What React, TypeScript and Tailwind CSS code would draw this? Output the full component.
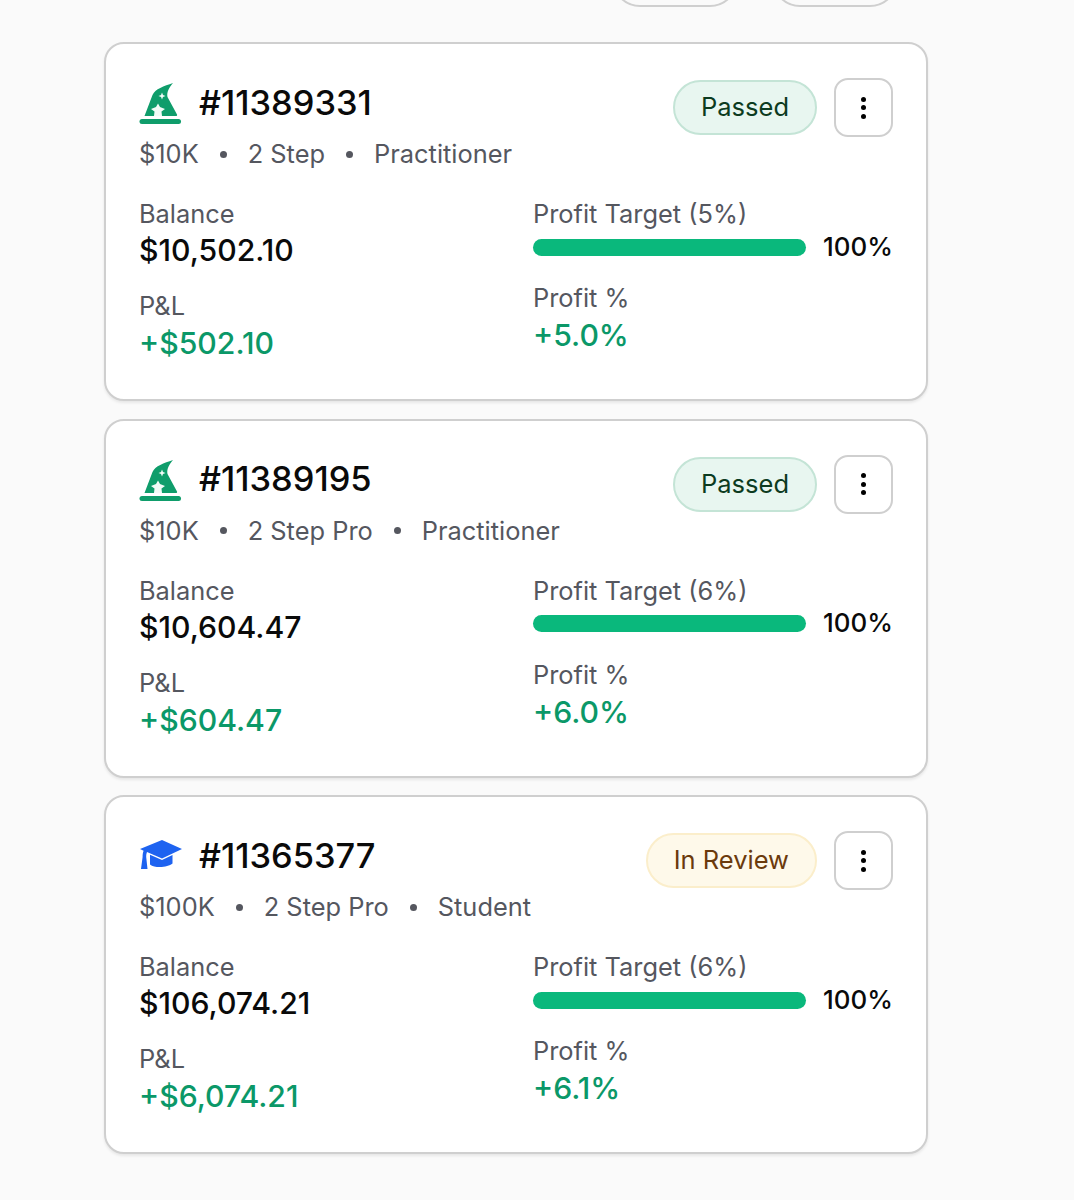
import React from "react";

type Account = {
  id: string;
  size: string;
  step: string;
  level: string;
  status: "Passed" | "In Review";
  balance: string;
  pnl: string;
  target: string;
  profit: string;
  icon: "wizard" | "student";
};

const accounts: Account[] = [
  { id: "#11389331", size: "$10K", step: "2 Step", level: "Practitioner", status: "Passed", balance: "$10,502.10", pnl: "+$502.10", target: "Profit Target (5%)", profit: "+5.0%", icon: "wizard" },
  { id: "#11389195", size: "$10K", step: "2 Step Pro", level: "Practitioner", status: "Passed", balance: "$10,604.47", pnl: "+$604.47", target: "Profit Target (6%)", profit: "+6.0%", icon: "wizard" },
  { id: "#11365377", size: "$100K", step: "2 Step Pro", level: "Student", status: "In Review", balance: "$106,074.21", pnl: "+$6,074.21", target: "Profit Target (6%)", profit: "+6.1%", icon: "student" },
];

function WizardHat() {
  return (
    <svg width="44" height="44" viewBox="0 0 44 44" className="shrink-0">
      <path d="M5.5 35 L13.5 14 C16 8 25 5 34 2 C30 7 27.5 11 28.5 16 L38 33.5 C38.4 34.4 38 35 37 35 Z" fill="#0f9d6b" />
      <rect x="0.5" y="38" width="41.5" height="5" rx="2.5" fill="#0f9d6b" />
      <path d="M23 11.5 L24 14 L26.5 15 L24 16 L23 18.5 L22 16 L19.5 15 L22 14 Z" fill="#f2fbf7" />
      <path d="M19 22.5 L21 26 L26 28 L22.5 30.5 L23 35 L15 35 L15.5 30.5 L12 28 L17 26 Z" fill="#f2fbf7" />
    </svg>
  );
}

function StudentCap() {
  return (
    <svg width="44" height="44" viewBox="0 0 44 44" className="shrink-0">
      <path d="M23 6 L43 15 L23 24.5 L8 18 C7.4 19.5 7.2 21 7.2 23 L8.5 35 L2 35 L3.6 23 C3.6 20 4 18.5 4.6 16.8 L1 15 Z" fill="#1e63f0" />
      <path d="M11 20.8 L23 26 L33.5 21 L33.5 29.5 C29 33.5 16 34.5 11 30.5 Z" fill="#1e63f0" />
    </svg>
  );
}

function MoreButton() {
  return (
    <button className="flex size-[59px] flex-col items-center justify-center gap-[3.5px] rounded-[14px] border-2 border-[#cfcfcf] bg-white">
      <span className="size-[5px] rounded-full bg-black" />
      <span className="size-[5px] rounded-full bg-black" />
      <span className="size-[5px] rounded-full bg-black" />
    </button>
  );
}

function Dot() {
  return <span className="mx-[21px] size-[7px] rounded-full bg-[#55575f]" />;
}

function AccountCard({ account }: { account: Account }) {
  const passed = account.status === "Passed";
  return (
    <div className="h-[359px] rounded-[20px] border-2 border-[#cfcfcf] bg-white pl-[33px] pr-[33px] pt-[34px] shadow-[0_2px_3px_rgba(0,0,0,0.08)]">
      <div className="flex items-start justify-between">
        <div>
          <div className="flex h-[50px] items-center gap-[16px]">
            {account.icon === "wizard" ? <WizardHat /> : <StudentCap />}
            <span className="text-[34.4px] font-medium leading-none text-[#0a0a0a]">{account.id}</span>
          </div>
          <div className="mt-[8px] flex items-center text-[25.4px] leading-[36px] text-[#55575f]">
            <span>{account.size}</span>
            <Dot />
            <span>{account.step}</span>
            <Dot />
            <span>{account.level}</span>
          </div>
        </div>
        <div className="flex items-center gap-[17px]">
          <span
            className={
              passed
                ? "flex h-[55px] items-center rounded-full border-2 border-[#c4e4d6] bg-[#e8f6f0] px-[26px] text-[25.5px] text-[#0c3b20]"
                : "flex h-[55px] items-center rounded-full border-2 border-[#fbeecb] bg-[#fef9ea] px-[26px] text-[25.5px] text-[#6b3a0c]"
            }
          >
            {account.status}
          </span>
          <MoreButton />
        </div>
      </div>
      <div className="mt-[27px] grid grid-cols-[394px_1fr]">
        <div>
          <div className="text-[25.4px] leading-[30px] text-[#55575f]">Balance</div>
          <div className="mt-[1px] text-[30.2px] font-medium leading-[40px] text-[#0a0a0a]">{account.balance}</div>
          <div className="mt-[21px] text-[25.4px] leading-[30px] text-[#55575f]">P&amp;L</div>
          <div className="mt-[2px] text-[30.2px] font-medium leading-[40px] text-[#0b9868]">{account.pnl}</div>
        </div>
        <div>
          <div className="text-[25.4px] leading-[30px] text-[#55575f]">{account.target}</div>
          <div className="mt-[2px] flex h-[32px] items-center justify-between">
            <div className="h-[17px] w-[273px] rounded-full bg-[#0ab87c]" />
            <span className="text-[25.9px] font-medium text-[#0a0a0a]">100%</span>
          </div>
          <div className="mt-[20px] text-[25.4px] leading-[30px] text-[#55575f]">Profit %</div>
          <div className="mt-[2px] text-[30.2px] font-medium leading-[40px] text-[#0b9868]">{account.profit}</div>
        </div>
      </div>
    </div>
  );
}

export default function App() {
  return (
    <div className="h-[1200px] overflow-hidden bg-[#fafafa] font-['Inter',sans-serif]">
      <div className="ml-[104px] w-[824px]">
        {/* tabs cut off by the top edge */}
        <div className="flex h-[42px] justify-end gap-[34px] pr-[30px]">
          <div className="-mt-[50px] h-[57px] w-[126px] rounded-[28px] border-2 border-[#cfcfcf]" />
          <div className="-mt-[50px] h-[57px] w-[126px] rounded-[28px] border-2 border-[#cfcfcf]" />
        </div>
        <div className="flex flex-col gap-[17.5px]">
          {accounts.map((account) => (
            <AccountCard key={account.id} account={account} />
          ))}
        </div>
      </div>
    </div>
  );
}
